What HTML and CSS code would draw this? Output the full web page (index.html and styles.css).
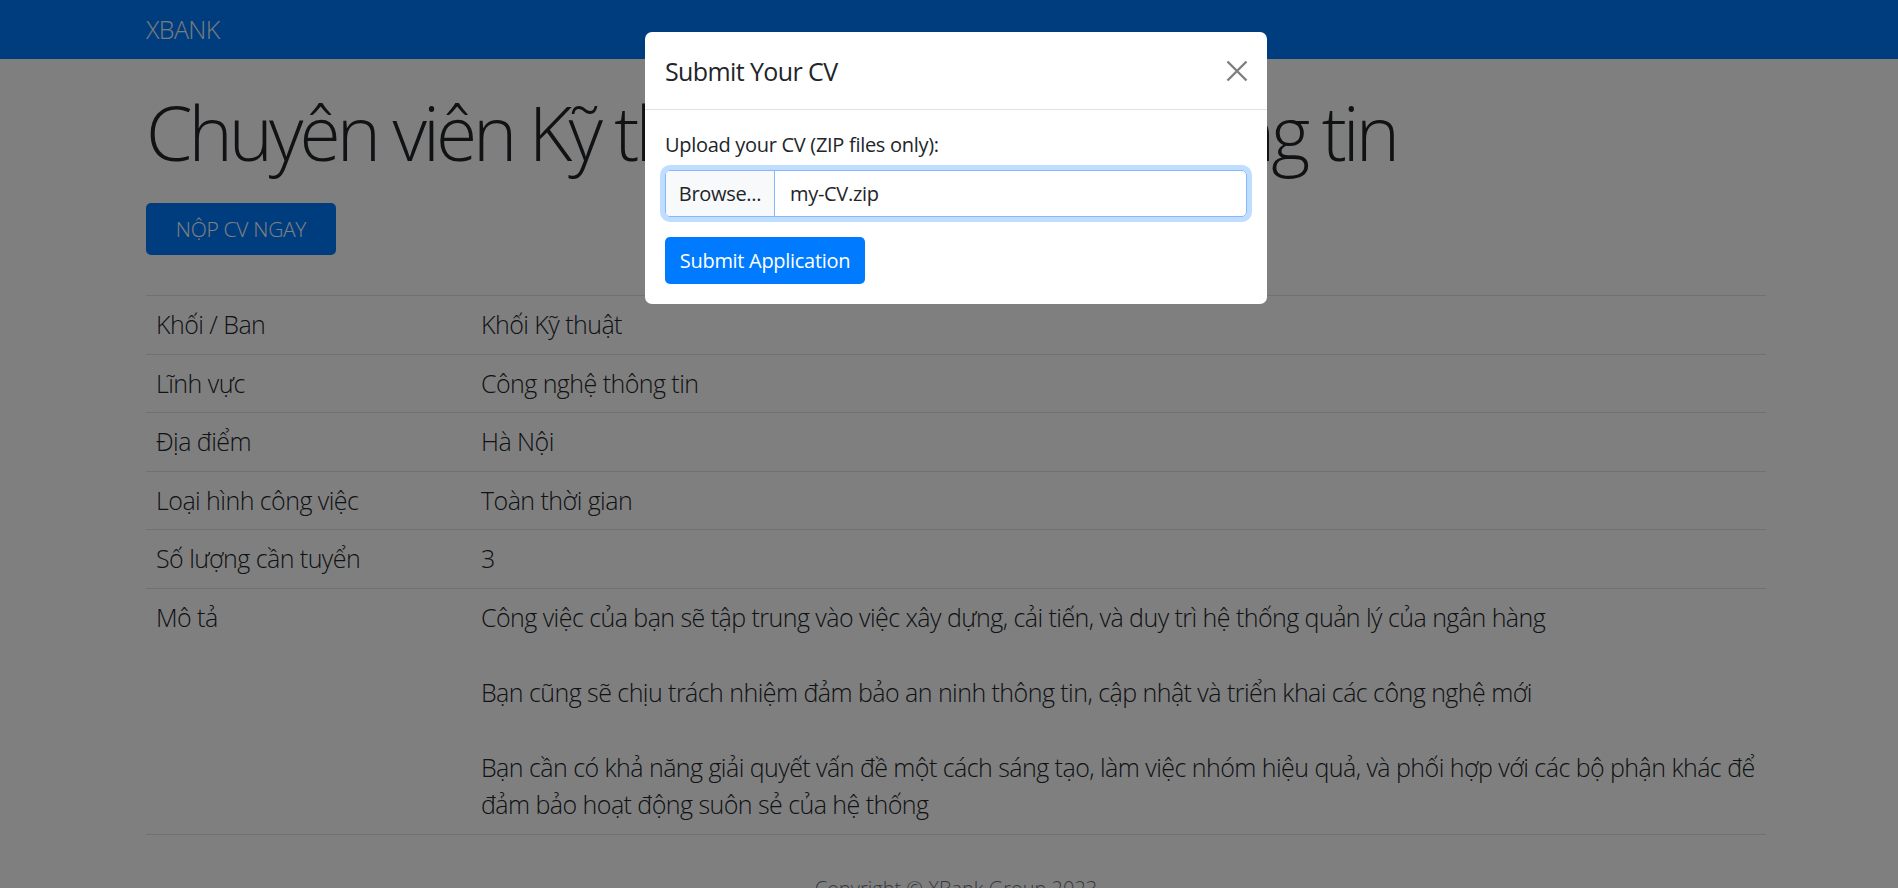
FILE: index.html
```html
<!DOCTYPE html>
<html lang="vi">
<head>
<meta charset="utf-8">
<title>XBANK - Chuyên viên Kỹ thuật Công nghệ thông tin</title>
<link rel="stylesheet" href="styles.css">
</head>
<body>
<nav class="navbar">
  <div class="nav-inner">
    <a class="brand" href="#">XBANK</a>
  </div>
</nav>
<main class="container">
  <h1 class="job-title">Chuyên viên Kỹ thuật Công nghệ thông tin</h1>
  <button class="btn-apply" type="button">NỘP CV NGAY</button>
  <table class="job-table">
    <tbody>
      <tr><td class="key">Khối / Ban</td><td>Khối Kỹ thuật</td></tr>
      <tr><td class="key">Lĩnh vực</td><td>Công nghệ thông tin</td></tr>
      <tr><td class="key">Địa điểm</td><td>Hà Nội</td></tr>
      <tr><td class="key">Loại hình công việc</td><td>Toàn thời gian</td></tr>
      <tr><td class="key">Số lượng cần tuyển</td><td>3</td></tr>
      <tr><td class="key">Mô tả</td><td>Công việc của bạn sẽ tập trung vào việc xây dựng, cải tiến, và duy trì hệ thống quản lý của ngân hàng<br><br>Bạn cũng sẽ chịu trách nhiệm đảm bảo an ninh thông tin, cập nhật và triển khai các công nghệ mới<br><br>Bạn cần có khả năng giải quyết vấn đề một cách sáng tạo, làm việc nhóm hiệu quả, và phối hợp với các bộ phận khác để đảm bảo hoạt động suôn sẻ của hệ thống</td></tr>
    </tbody>
  </table>
</main>
<footer class="footer">Copyright © XBank Group 2023</footer>

<div class="backdrop"></div>
<div class="modal-wrap">
  <div class="modal">
    <div class="modal-header">
      <h5 class="modal-title">Submit Your CV</h5>
      <button class="close" type="button" aria-label="Close">
        <svg width="22" height="22" viewBox="0 0 22 22"><path d="M1.5 1.5 L20.5 20.5 M20.5 1.5 L1.5 20.5" stroke="#000" stroke-width="2.4" fill="none"/></svg>
      </button>
    </div>
    <div class="modal-body">
      <label class="field-label">Upload your CV (ZIP files only):</label>
      <div class="file-input">
        <span class="file-btn">Browse...</span>
        <span class="file-name">my-CV.zip</span>
      </div>
      <button class="btn-submit" type="button">Submit Application</button>
    </div>
  </div>
</div>
</body>
</html>
```
FILE: styles.css
```css
html, body {
  margin: 0;
  padding: 0;
}
body {
  font-family: "Open Sans", "Noto Sans", "Liberation Sans", sans-serif;
  font-weight: 300;
  color: #212529;
  background: #ffffff;
  width: 1898px;
  height: 888px;
  overflow: hidden;
}
.navbar {
  background: #007bff;
  height: 59px;
}
.nav-inner {
  width: 1620px;
  margin-left: 146px;
  height: 59px;
  display: flex;
  align-items: center;
}
.brand {
  color: #f4f6f9;
  text-decoration: none;
  font-size: 25px;
  line-height: 1;
  font-weight: 300;
  letter-spacing: -0.6px;
}
.container {
  width: 1620px;
  margin-left: 146px;
}
.job-title {
  font-size: 75px;
  font-weight: 300;
  line-height: 1.2;
  margin: 28px 0 0 0;
  letter-spacing: -4px;
}
.btn-apply {
  margin-top: 26px;
  width: 190px;
  height: 52px;
  background: #007bff;
  color: #ffffff;
  border: none;
  border-radius: 5px;
  font-family: inherit;
  font-size: 21px;
  font-weight: 300;
  letter-spacing: -0.3px;
  padding: 0;
}
.job-table {
  margin-top: 40px;
  width: 100%;
  border-collapse: collapse;
  font-size: 25px;
  line-height: 37.5px;
  letter-spacing: -0.55px;
}
.job-table td {
  border-top: 1px solid #dee2e6;
  padding: 10px 10px 10px 10px;
  vertical-align: top;
}
.job-table tr:last-child td {
  border-bottom: 1px solid #dee2e6;
}
.job-table td.key {
  width: 305px;
}
.footer {
  text-align: center;
  font-size: 20px;
  color: #6c757d;
  padding-top: 40px;
  width: 1620px;
  margin-left: 146px;
}

/* modal overlay */
.backdrop {
  position: fixed;
  inset: 0;
  background: rgba(0, 0, 0, 0.5);
}
.modal-wrap {
  position: fixed;
  inset: 0;
  display: flex;
  align-items: flex-start;
}
.modal {
  margin-top: 32px;
  margin-left: 645px;
  width: 622px;
  background: #ffffff;
  border-radius: 7px;
  font-weight: 400;
  color: #212529;
}
.modal-header {
  display: flex;
  align-items: center;
  justify-content: space-between;
  padding: 0 19px 0 20px;
  height: 77px;
  border-bottom: 1px solid #dee2e6;
}
.modal-title {
  margin: 0;
  font-size: 25px;
  font-weight: 400;
  letter-spacing: -0.6px;
}
.close {
  background: none;
  border: none;
  padding: 0;
  opacity: 0.5;
  display: flex;
  margin-top: 0;
}
.modal-body {
  padding: 20px;
  display: flex;
  flex-direction: column;
  align-items: flex-start;
}
.field-label {
  font-size: 20px;
  line-height: 30px;
  letter-spacing: -0.3px;
  margin-bottom: 10px;
}
.file-input {
  align-self: stretch;
  display: flex;
  height: 47px;
  border: 1px solid #86b7fe;
  border-radius: 5px;
  box-shadow: 0 0 0 5px rgba(0, 123, 255, 0.25);
  overflow: hidden;
  box-sizing: border-box;
  font-size: 20px;
  letter-spacing: -0.3px;
}
.file-btn {
  width: 108px;
  background: #f8f9fa;
  border-right: 1px solid #86b7fe;
  display: flex;
  align-items: center;
  justify-content: center;
}
.file-name {
  display: flex;
  align-items: center;
  padding-left: 15px;
}
.btn-submit {
  margin-top: 20px;
  width: 200px;
  height: 47px;
  background: #007bff;
  color: #ffffff;
  border: none;
  border-radius: 5px;
  font-family: inherit;
  font-size: 20px;
  font-weight: 400;
  letter-spacing: -0.3px;
  padding: 0;
}
```
